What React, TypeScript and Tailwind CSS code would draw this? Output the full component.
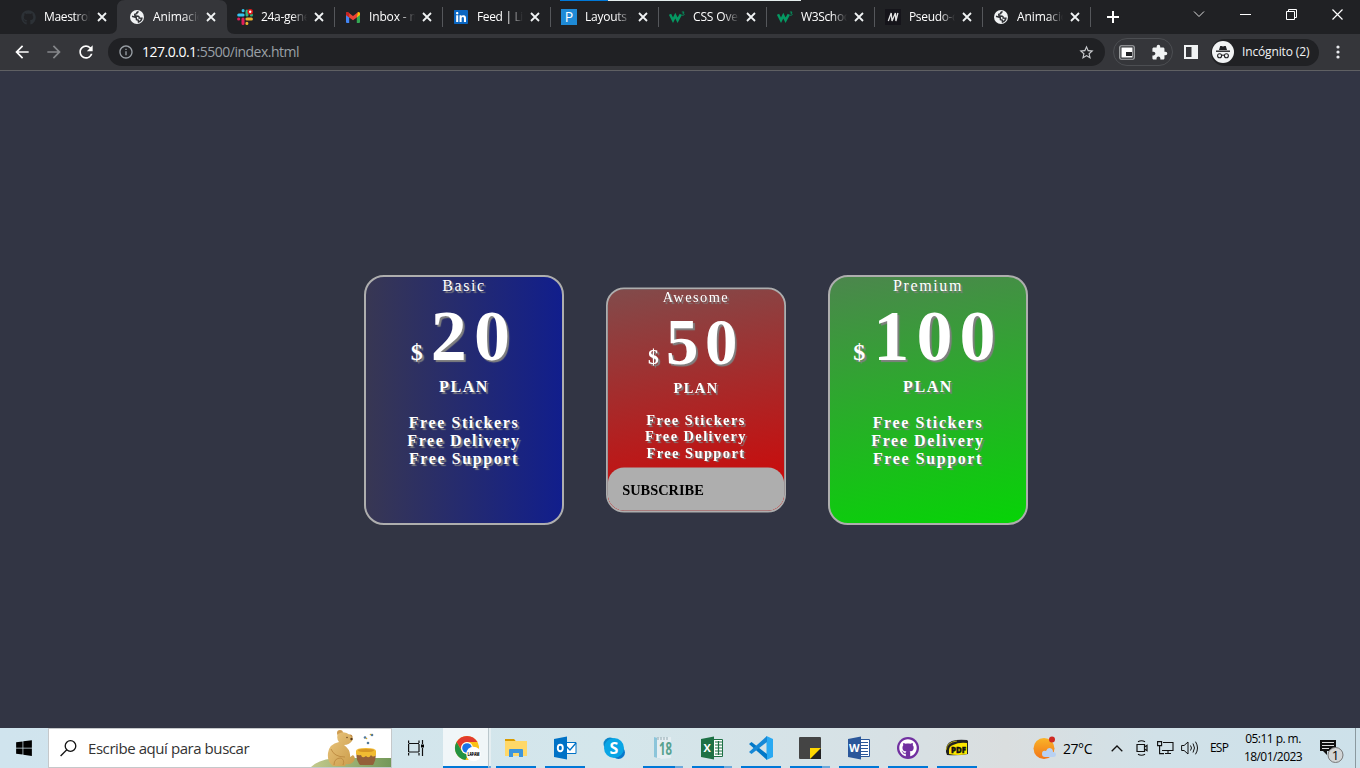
import React from "react";
import { FaGithub, FaGlobeAmericas, FaLinkedin, FaWindows } from "react-icons/fa";
import { MdArrowBack, MdArrowForward, MdExtension, MdInfoOutline, MdRefresh, MdStarBorder } from "react-icons/md";

const SlackIcon = () => (
  <svg width="16" height="16" viewBox="0 0 16 16">
    <g strokeWidth="3" strokeLinecap="round">
      <path d="M6.1 1.6v.1M1.7 6h4.4" stroke="#36c5f0" />
      <path d="M10 2v4M14.4 6h.1" stroke="#2eb67d" />
      <path d="M9.9 14.3v.1M9.9 10h4.5" stroke="#ecb22e" />
      <path d="M6 10v4.4M1.6 10h.1" stroke="#e01e5a" />
    </g>
    <circle cx="13.2" cy="2.8" r="2.800" fill="#e01818" />
    <circle cx="13.2" cy="2.8" r="1.2" fill="#fff" />
  </svg>
);
const GmailIcon = () => (
  <svg width="14" height="11" viewBox="0 0 14 11">
    <path d="M0 1.5 3.2 4v7H1a1 1 0 0 1-1-1z" fill="#4285f4" />
    <path d="M14 1.5 10.8 4v7H13a1 1 0 0 0 1-1z" fill="#34a853" />
    <path d="M10.8 1.2 12 .3a1.3 1.3 0 0 1 2 1.2V3l-3.2 2.5z" fill="#fbbc04" />
    <path d="M0 3V1.5A1.3 1.3 0 0 1 2 .3L7 4l5-3.7-1.2 5.2L7 8.2 3.2 5.5z" fill="#ea4335" />
    <path d="M0 1.5A1.3 1.3 0 0 1 2 .3l1.2.9v4.3L0 3z" fill="#c5221f" />
  </svg>
);
const Globe = () => (
  <svg width="14" height="14" viewBox="0 0 14 14">
    <circle cx="7" cy="7" r="7" fill="#f1f3f4" />
    <path d="M8.600 1.800Q6.500 2 6.800 3.600L4.800 4.300q-.4 1.600 1.200 1.700l2.200.2q1.200.6 1 1.900l2.700.1Q11.500 11 8.500 12.100l-.3-2-1.700-.5-.3-2L2 6.300" fill="none" stroke="#303236" strokeWidth="1.500" />
  </svg>
);
const W3Icon = () => (
  <svg width="16" height="12" viewBox="0 0 16 12">
    <path d="M1 3.2 4 9.2 6.3 4.6 8.6 9.2 11.8 3.4" fill="none" stroke="#059862" strokeWidth="2.5" />
    <path d="M12.8 1h2.3l-1.2 1.4c1 0 1.3.5 1.2 1.1-.1.9-1.6 1.1-2.4.4" fill="none" stroke="#059862" strokeWidth=".9" />
  </svg>
);
const tabs: { title: string; icon: React.ReactNode; track: string; active?: boolean; line?: boolean }[] = [
  { title: "Maestrol", icon: <FaGithub size={15} color="#2c3136" />, track: "tracking-[-0.35px]" },
  { title: "Animació", icon: <Globe />, track: "tracking-[-0.1px]", active: true },
  { title: "24a-gene", icon: <SlackIcon />, track: "tracking-[-0.3px]", line: true },
  { title: "Inbox - m", icon: <GmailIcon />, track: "tracking-[-0.15px]", line: true },
  { title: "Feed | Lin", icon: <FaLinkedin size={16} color="#0a66c2" className="rounded-sm bg-[linear-gradient(#fff,#fff)] bg-[length:12px_12px] bg-center bg-no-repeat" />, track: "tracking-[-0.35px]", line: true },
  { title: "Layouts -", icon: <span className="flex h-4 w-4 items-center justify-center bg-[#1e8ad6] text-[14px] leading-none text-white">P</span>, track: "tracking-[-0.25px]", line: true },
  { title: "CSS Over", icon: <W3Icon />, track: "tracking-[-0.15px]", line: true },
  { title: "W3Schoo", icon: <W3Icon />, track: "tracking-[-0.35px]", line: true },
  { title: "Pseudo-c", icon: <svg width="16" height="16" viewBox="0 0 16 16"><path fill="#15141a" d="M0 0h16v16H0z" /><path d="M3.3 12 6.2 4 7 12l3.4-8 .5 8 2-8" fill="none" stroke="#e4e4e4" strokeWidth="1.3" /></svg>, track: "tracking-[-0.35px]", line: true },
  { title: "Animació", icon: <Globe />, track: "tracking-[-0.1px]", line: true },
];

function Tabs() {
  return (
    <div className="relative flex h-[34px] bg-[#202124] pl-[10px]">
      <div className="absolute left-[560px] top-0 flex h-px">
        <div className="w-12 bg-[#0078d7]" />
        <div className="w-[193px] bg-[#e5eeee]" />
      </div>
      {tabs.map((t, i) => (
        <div key={i} className={"relative flex h-[34px] shrink-0 items-center pl-[10px] " + (i === 0 ? "w-[109px]" : "w-[108px]")}>
          {t.active && (
            <svg className="absolute -left-[10px] top-0" width="126" height="34" viewBox="0 0 126 34">
              <path d="M0 34q8 0 8-8V8q0-8 8-8h94q8 0 8 8v18q0 8 8 8z" fill="#35363a" />
            </svg>
          )}
          <div className="relative flex h-4 w-4 items-center justify-center">{t.icon}</div>
          <div className={"relative ml-2 w-[47px] overflow-hidden whitespace-nowrap text-[12px] leading-4 text-white [mask-image:linear-gradient(to_right,#000_65%,transparent_98%)] " + t.track}>{t.title}</div>
          <svg className="relative ml-[6px]" width="10" height="10" viewBox="0 0 10 10"><path d="M1 1l8 8M9 1l-8 8" stroke="#f1f3f4" strokeWidth="1.8" /></svg>
          {t.line && <div className="absolute right-0 top-[7px] h-5 w-px bg-[#55575b]" />}
        </div>
      ))}
      <svg className="ml-4 mt-[11px]" width="12" height="12" viewBox="0 0 12 12"><path d="M6 0v12M0 6h12" stroke="#fff" strokeWidth="2" /></svg>
      <div className="flex-1" />
      <div className="flex h-7 items-center gap-[35px] pr-[17px]">
        <svg width="12" height="8" viewBox="0 0 12 8"><path d="M1 1.5l5 5 5-5" fill="none" stroke="#ddd" /></svg>
        <svg width="11" height="11" viewBox="0 0 11 11"><path d="M0 5.5h11" stroke="#fff" /></svg>
        <svg width="11" height="11" viewBox="0 0 11 11"><path d="M.5 2.5h8v8h-8zM2.5 2.5v-2h8v8h-2" fill="none" stroke="#fff" /></svg>
        <svg width="11" height="11" viewBox="0 0 11 11"><path d="M.5.5l10 10M10.500.5l-10 10" stroke="#fff" strokeWidth="1.200" /></svg>
      </div>
    </div>
  );
}

function Toolbar() {
  return (
    <div className="flex h-[37px] items-center border-b border-[#5f6063] bg-[#35363a]">
      <MdArrowBack size={20} color="#fff" className="ml-3" />
      <MdArrowForward size={20} color="#85878a" className="ml-3" />
      <MdRefresh size={20} color="#fff" className="ml-3" />
      <div className="ml-3 flex h-7 w-[997px] items-center rounded-full bg-[#202124] pl-[10px] pr-[10px]">
        <MdInfoOutline size={16} color="#9aa0a6" />
        <div className="ml-2 flex-1 text-[14px] leading-5 tracking-[-0.5px] text-[#9aa0a6]"><span className="text-white">127.0.0.1</span>:5500/index.html</div>
        <MdStarBorder size={17} color="#c8cacd" />
      </div>
      <div className="ml-2 flex h-[28px] w-[60px] items-center justify-between rounded-full border border-[#4c4e52] pl-[5px] pr-1">
        <svg width="16" height="15" viewBox="0 0 16 15"><rect x=".75" y=".75" width="14.5" height="13.500" rx="1.5" fill="none" stroke="#a9abad" strokeWidth="1.2" /><path d="M2.500 2.500h11v10h-11z" fill="#fff" /><path d="M7 7h6v4H7z" fill="#202124" /></svg>
        <MdExtension size={17} color="#f1f3f4" />
      </div>
      <svg className="ml-[11px]" width="14" height="14" viewBox="0 0 14 14"><path d="M1 1h12v12H1zM8.500 1H13v12H8.500z" fill="none" stroke="#f1f3f4" strokeWidth="2" /><path d="M9 1h4v12H9z" fill="#f1f3f4" /></svg>
      <div className="ml-[13px] flex h-[27px] w-[108px] items-center rounded-full bg-[#202124] pl-[1px]">
        <svg width="22" height="22" viewBox="0 0 22 22"><circle cx="11" cy="11" r="11" fill="#f1f3f4" /><path d="M7 9l1.200-4h1.300l1.500.6 1.500-.6h1.300L15 9z" fill="#202124" /><path d="M4 10.200h14" stroke="#202124" strokeWidth="1.400" /><g fill="none" stroke="#202124" strokeWidth="1.100"><circle cx="7.600" cy="14.700" r="2" /><circle cx="14.400" cy="14.700" r="2" /><path d="M9.600 14.400q1.400-.8 2.800 0" /></g></svg>
        <span className="ml-2 whitespace-nowrap text-[12px] tracking-[-0.14px] text-[#f1f3f4]">Incógnito (2)</span>
      </div>
      <svg className="ml-[17px]" width="4" height="14" viewBox="0 0 4 14" fill="#e8eaed"><circle cx="2" cy="2" r="1.600" /><circle cx="2" cy="7" r="1.600" /><circle cx="2" cy="12" r="1.600" /></svg>
    </div>
  );
}

function Card({ name, price, skin, subscribe }: { name: string; price: string; skin: string; subscribe?: boolean }) {
  return (
    <div className={"relative h-[250px] w-[200px] overflow-hidden rounded-[20px] border-2 border-[#aeaeae] text-center text-[16px] leading-[18px] tracking-[0.1em] text-white [text-shadow:2px_2px_1px_gray] " + skin}>
      <div>{name}</div>
      <div className="h-[83px] whitespace-nowrap font-bold leading-[83px]">
        <span className="text-[24px] tracking-[0.1em]">$</span> <span className="text-[72px] tracking-[0.1em]">{price}</span>
      </div>
      <div className="font-bold">PLAN</div>
      <div className="mt-[18px] font-bold">Free Stickers<br />Free Delivery<br />Free Support</div>
      {subscribe && (
        <div className="absolute inset-x-0 bottom-0 h-12 rounded-[18px] bg-[#aeaeae] pl-4 pt-4 text-left font-bold tracking-normal text-black [text-shadow:none]">SUBSCRIBE</div>
      )}
    </div>
  );
}

const ChromeIcon = () => (
  <svg width="28" height="28" viewBox="0 0 28 28">
    <circle cx="14" cy="14" r="12" fill="#fbc116" />
    <path d="M3.600 8A12 12 0 0 1 24.400 8H14a6 6 0 0 0-5 9z" fill="#e23b2e" />
    <path d="M3.600 8l5.200 9a6 6 0 0 0 7 2.700L12.300 26A12 12 0 0 1 3.600 8z" fill="#229342" />
    <circle cx="14" cy="14" r="6" fill="#fff" /><circle cx="14" cy="14" r="4.800" fill="#1a73e8" />
    <circle cx="20.500" cy="20" r="7.300" fill="#fff" />
    <text x="20.500" y="21.500" fontSize="4.500" fontWeight="900" textAnchor="middle" textLength="12" lengthAdjust="spacingAndGlyphs" fill="#111">LAPAM</text>
  </svg>
);
const FolderIcon = () => (
  <svg width="22" height="20" viewBox="0 0 22 20"><path d="M0 1h9l2 2h11v15H0z" fill="#ffd868" /><path d="M0 1h9l1.500 2H0z" fill="#d99b00" /><path d="M4 19v-7q0-1 1-1h12q1 0 1 1v7h-4v-4H8v4z" fill="#3c95dc" /></svg>
);
const OutlookIcon = () => (
  <svg width="24" height="24" viewBox="0 0 24 24"><path d="M11 6.500h12v11H11z" fill="#fff" stroke="#0072c6" /><path d="M13 10l4 4 6-7" fill="none" stroke="#0072c6" strokeWidth="1.300" /><path d="M1 3l13-2.500v23L1 21z" fill="#0072c6" /><ellipse cx="7.300" cy="12" rx="2.500" ry="3.200" fill="none" stroke="#fff" strokeWidth="1.900" /></svg>
);
const NotesIcon = () => (
  <svg width="20" height="24" viewBox="0 0 20 24"><path d="M1 1l7 2v20l-7-2z" fill="#8cc5da" /><path d="M4 2l14-1v21l-10 1-4-1z" fill="#e5eef2" /><path d="M5 1v3M8 1v3M11 1v3M14 1v3" stroke="#93aab2" /><text x="6" y="19" fontSize="17" fontWeight="700" fill="#58a28f" textLength="13" lengthAdjust="spacingAndGlyphs">18</text></svg>
);
const OfficeIcon = ({ letter, color }: { letter: string; color: string }) => (
  <svg width="24" height="24" viewBox="0 0 24 24"><path d="M11 3.500h11.500v17H11z" fill="#fff" stroke={color} /><path d={letter === "X" ? "M15 6h7M15 9h7M15 12h7M15 15h7M15 18h7M18.500 5v14" : "M14 6.500h7M14 9.500h7M14 12.500h7M14 15.500h7M14 18.500h7"} stroke={color} strokeWidth="1.200" /><path d="M1 3l13-2.500v23L1 21z" fill={color} /><text x="7.200" y="16" fontSize="11" fontWeight="700" textAnchor="middle" fill="#fff">{letter}</text></svg>
);
const CodeIcon = () => (
  <svg width="26" height="26" viewBox="0 0 26 26"><path d="M18.500 1L25 4v18l-6.500 3z" fill="#29a9f2" /><path d="M1 9l2.500-2L19 19v6z" fill="#0078c8" /><path d="M1 17l2.500 2L19 7V1z" fill="#1688d6" /></svg>
);
const StickyIcon = () => (
  <svg width="22" height="22" viewBox="0 0 22 22"><path d="M0 1q0-1 1-1h20q1 0 1 1v10L11 22H1q-1 0-1-1z" fill="#444" /><path d="M11 22V11h11v11z" fill="#222" /><path d="M11 22V11h11z" fill="#ffd800" /></svg>
);
const PdfIcon = () => (
  <svg width="24" height="20" viewBox="0 0 24 20"><path d="M1 14Q0 6 7 3q6-2 15-1l1 1v13q-10 2-21 1z" fill="#222" /><path d="M4 16q-1-8 4-9 6-3 14-2v11q-9 2-18 0z" fill="#fbe600" /><path d="M1 12Q2 4 12 3" fill="none" stroke="#e4d31a" strokeWidth=".7" /><text x="13.500" y="14.500" fontSize="8.500" fontWeight="900" textAnchor="middle" textLength="15" lengthAdjust="spacingAndGlyphs" fill="#111" stroke="#111" strokeWidth=".4">PDF</text></svg>
);
const SkypeIcon = () => (
  <svg width="24" height="24" viewBox="0 0 24 24"><circle cx="8" cy="8" r="6.500" fill="#0b86c9" /><circle cx="16.500" cy="16.500" r="6.500" fill="#0878cb" /><circle cx="12" cy="12" r="10" fill="#09a5e5" /><text x="12" y="17.500" fontSize="16" fontWeight="700" textAnchor="middle" fill="#fff">S</text></svg>
);

const apps: { icon: React.ReactNode; mode: "one" | "many" | "none" }[] = [
  { icon: <FolderIcon />, mode: "one" },
  { icon: <OutlookIcon />, mode: "one" },
  { icon: <SkypeIcon />, mode: "none" },
  { icon: <NotesIcon />, mode: "many" },
  { icon: <OfficeIcon letter="X" color="#1e7145" />, mode: "many" },
  { icon: <CodeIcon />, mode: "one" },
  { icon: <StickyIcon />, mode: "many" },
  { icon: <OfficeIcon letter="W" color="#2b579a" />, mode: "one" },
  { icon: <span className="flex h-[22px] w-[22px] items-center justify-center rounded-full bg-[#7130a0]"><FaGithub size={18} color="#fff" /></span>, mode: "one" },
  { icon: <PdfIcon />, mode: "one" },
];

const Bear = () => (
  <svg width="80" height="38" viewBox="0 0 80 38">
    <defs>
      <linearGradient id="hill"><stop stopColor="#c3c98c" /><stop offset="1" stopColor="#739859" /></linearGradient>
      <linearGradient id="fur" x2="1" y2="1"><stop stopColor="#ebc77f" /><stop offset="1" stopColor="#c99a48" /></linearGradient>
    </defs>
    <path d="M0 38Q9 29 30 29h50v9z" fill="url(#hill)" />
    <circle cx="29" cy="4" r="3" fill="#cf9c50" /><circle cx="39" cy="8" r="2.500" fill="#bd8339" />
    <path d="M27 5q6-4 12 1 4 3 2 6-3 4-8 4 7 5 6 12l3-2q3 2 1 6-3 4-8 3l-1 2H22q-6-4-5-13 1-9 11-11-3-4-1-8z" fill="url(#fur)" />
    <path d="M20 20q3 8 14 8M23 36q0-7 7-7 4 2 2 7" fill="none" stroke="#b9853c" strokeWidth=".8" />
    <circle cx="40.500" cy="10" r="1.200" fill="#573718" /><circle cx="36" cy="8.500" r=".7" fill="#573718" />
    <path d="M46 23h18q2 7-2 13H49q-5-6-3-13z" fill="#946039" />
    <path d="M45 22q0-3 10-3t10 3v4q-3 3-5 0-2 4-5 1-4 3-5-1-3 1-5-1z" fill="#f1bb32" /><ellipse cx="55" cy="21.500" rx="8" ry="1.600" fill="#d79724" />
    <g fill="#527a9c"><circle cx="54" cy="8.500" r="1.300" /><circle cx="61" cy="6" r="1.300" /><circle cx="57" cy="14" r="1.300" /></g><g fill="#d6a927"><circle cx="55.500" cy="9.500" r=".8" /><circle cx="59.500" cy="5.500" r=".8" /></g>
  </svg>
);

function Taskbar() {
  return (
    <div className="flex h-10 bg-[linear-gradient(90deg,#d0e4ee_0%,#d4e6eb_45%,#d7e1e5_65%,#dadedf_74%,#d1e1e8_85%,#cde1ea_100%)] text-black">
      <div className="flex w-12 items-center justify-center"><FaWindows size={18} /></div>
      <div className="flex w-[344px] items-center border border-[#c5c8ca] bg-white pl-[11px]">
        <svg width="17" height="17" viewBox="0 0 17 17"><circle cx="10.500" cy="6" r="5.300" fill="none" stroke="#111" strokeWidth="1.300" /><path d="M6.800 9.800L.6 16" stroke="#111" strokeWidth="1.300" /></svg>
        <span className="ml-[11px] flex-1 whitespace-nowrap text-[15px] tracking-[-0.43px] text-[#333]">Escribe aquí para buscar</span>
        <Bear />
      </div>
      <div className="flex w-[51px] items-center justify-center pr-[2px]">
        <svg width="17" height="16" viewBox="0 0 17 16"><path d="M.6 3V.6M11 .6V3M.6 3.500H11M.6 4v8M11 4v8M.6 12H11M.6 15.500V13M11 15.500V13M14.500 0v4M14.500 8v8" fill="none" stroke="#111" strokeWidth="1.200" /><path d="M13 4.500h3v3h-3z" /></svg>
      </div>
      <div className="flex w-12">
        <div className="flex w-[45px] items-center justify-center border-b-2 border-[#0078d7] bg-[#f0f6f8] pl-[3px] pt-[2px]"><ChromeIcon /></div>
        <div className="w-[3px] border-b-2 border-l border-b-[#6ba9dc] border-l-[#bac7cc] bg-[#e5eef1]" />
      </div>
      {apps.map((app, i) => (
        <div key={i} className="flex w-[49px] flex-col items-center pl-[1px]">
          <div className="flex h-[38px] items-center pt-[1px]">{app.icon}</div>
          {app.mode !== "none" && <div className="flex h-[2px] w-10"><div className="flex-1 bg-[#0078d7]" />{app.mode === "many" && <div className="w-2 bg-[#6ba9dc]" />}</div>}
        </div>
      ))}
      <div className="flex-1" />
      <div className="flex w-[322px] items-center">
        <svg width="24" height="24" viewBox="0 0 24 24"><defs><linearGradient id="sun" x2="0" y2="1"><stop stopColor="#f9b428" /><stop offset="1" stopColor="#f27418" /></linearGradient></defs><circle cx="11" cy="12.500" r="10.500" fill="url(#sun)" /><path d="M9 18q0-4 4-3 2-5 6-2 1 1 1 3 3 0 3 2.500t-3 2.500h-8q-3 0-3-3z" fill="#b8d1f3" /><circle cx="19" cy="3.500" r="3" fill="#cf2922" /></svg>
        <span className="ml-[6px] w-[30px] whitespace-nowrap text-[14px] tracking-[-0.45px]">27°C</span>
        <svg className="ml-[18px]" width="12" height="7" viewBox="0 0 12 7"><path d="M.7 6.300L6 1l5.300 5.300" fill="none" stroke="#111" strokeWidth="1.300" /></svg>
        <svg className="ml-[13px]" width="12" height="16" viewBox="0 0 12 16"><path d="M1 4.500h7.500v7H1zM8.500 7l2.500-1.700v5.400L8.500 9M2 1.700Q5.500-.2 9 1.700M2 14.300q3.500 1.900 7 0" fill="none" stroke="#111" strokeWidth="1.200" /></svg>
        <svg className="ml-[9px]" width="17" height="14" viewBox="0 0 17 14"><path d="M6 1.500h10v8H5M8 12.500h6M11 9.500v3M.6.600h4v4h-4zM2.600 4.600v8H7" fill="none" stroke="#111" strokeWidth="1.100" /></svg>
        <svg className="ml-[7px]" width="18" height="14" viewBox="0 0 18 14"><path d="M.6 4.500h2.500L7 1v12L3.100 9.500H.6z" fill="none" stroke="#111" /><path d="M9.500 4.500q2 2.500 0 5M12 2.500q3 4.500 0 9M14.500.7q4 6.300 0 12.600" fill="none" stroke="#111" /></svg>
        <span className="ml-[11px] w-[19px] text-[12px] tracking-[-0.8px]">ESP</span>
        <div className="ml-[12px] w-[64px] whitespace-nowrap text-center text-[12px] leading-[18px] tracking-[-0.55px]">05:11 p. m.<br />18/01/2023</div>
        <svg className="ml-[13px] mt-[5px]" width="26" height="24" viewBox="0 0 26 24"><path d="M2 1h16v11H9v4l-4-4H2z" fill="#111" /><path d="M4 3.500h12M4 6.500h12M4 9.500h7" stroke="#ddd" /><circle cx="17.500" cy="16" r="7.500" fill="#d2d5d6" stroke="#777" /><text x="17.500" y="20.500" fontSize="13" textAnchor="middle">1</text></svg>
      </div>
      <div className="w-[5px] border-l border-[#8b999f]" />
    </div>
  );
}

export default function App() {
  return (
    <div className="flex h-[768px] w-[1360px] flex-col overflow-hidden bg-[#323544] font-['Open_Sans','Noto_Sans',sans-serif]">
      <Tabs />
      <Toolbar />
      <main className="flex flex-1 items-start justify-center gap-8 pl-8 pt-[204px] font-['Liberation_Serif',serif]">
        <Card name="Basic" price="20" skin="bg-[linear-gradient(90deg,#383753,#111e8c)]" />
        <Card name="Awesome" price="50" skin="scale-90 bg-[linear-gradient(170deg,#814b4b,#cd0909_92%)]" subscribe />
        <Card name="Premium" price="100" skin="bg-[linear-gradient(170deg,#4c864d,#06d406)]" />
      </main>
      <Taskbar />
    </div>
  );
}
